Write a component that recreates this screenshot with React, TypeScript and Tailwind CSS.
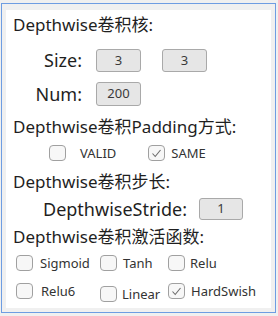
const font = "font-['Noto_Sans','Noto_Sans_CJK_SC',sans-serif]";

const Box = ({ value, w = 'w-[45px]', h = 'h-[23px]' }: { value: string; w?: string; h?: string }) => (
  <div
    className={`${w} ${h} flex items-center justify-center rounded-[3px] border border-[#a9a9a9] bg-[#e6e6e6] text-[13px] text-[#3a3a3a]`}
  >
    {value}
  </div>
);

const Check = ({ checked = false }: { checked?: boolean }) => (
  <div className="w-[17px] h-[16px] shrink-0 rounded-[4px] border border-[#a0a0a0] bg-[#f7f7f7] flex items-center justify-center">
    {checked ? (
      <svg width="13" height="13" viewBox="0 0 13 13" fill="none">
        <polyline points="2.5,6.5 5.2,9.5 10.5,3" stroke="#6b6b6b" strokeWidth="1.1" />
      </svg>
    ) : null}
  </div>
);

const Option = ({ label, checked, gap = 'gap-[6px]', className = '' }: OptionProps) => (
  <div className={`flex items-center h-[16px] ${gap} ${className}`}>
    <Check checked={checked} />
    <span className="text-[13px] leading-[16px] text-[#333]">{label}</span>
  </div>
);

type OptionProps = {
  label: string;
  checked?: boolean;
  gap?: string;
  className?: string;
};

const Heading = ({ children, className = '' }: { children: string; className?: string }) => (
  <div className={`h-[24px] leading-[24px] text-[17px] text-[#1f1f1f] pl-[7px] ${className}`}>{children}</div>
);

export default function App() {
  return (
    <div className={`w-[278px] h-[316px] bg-[#f0f0f0] pt-[3px] pl-[1px] ${font}`}>
      <div className="w-[275px] h-[310px] border border-[#6e9de2] pl-[4px] pt-[6px] pr-[3px] pb-[3px]">
        <div className="w-[265px] h-[298px] bg-white flex flex-col pt-[3px]">
          <Heading>Depthwise卷积核:</Heading>

          <div className="mt-[12px] flex items-center h-[23px]">
            <div className="w-[76px] text-right text-[18px] leading-[23px] text-[#1f1f1f]">Size:</div>
            <div className="ml-[14px] flex gap-[21px]">
              <Box value="3" />
              <Box value="3" />
            </div>
          </div>

          <div className="mt-[10px] flex items-center h-[24px]">
            <div className="w-[76px] text-right text-[18px] leading-[24px] text-[#1f1f1f]">Num:</div>
            <div className="ml-[14px]">
              <Box value="200" h="h-[24px]" />
            </div>
          </div>

          <Heading className="mt-[9px]">Depthwise卷积Padding方式:</Heading>

          <div className="mt-[6px] flex pl-[43px]">
            <Option label="VALID" gap="gap-[14px]" />
            <Option label="SAME" checked className="ml-[32px]" />
          </div>

          <Heading className="mt-[9px]">Depthwise卷积步长:</Heading>

          <div className="mt-[4px] flex items-center h-[22px] pl-[37px]">
            <div className="text-[18px] leading-[22px] text-[#1f1f1f]">DepthwiseStride:</div>
            <div className="ml-[12px]">
              <Box value="1" w="w-[44px]" h="h-[22px]" />
            </div>
          </div>

          <Heading className="mt-[5px] pl-[6px]">Depthwise卷积激活函数:</Heading>

          <div className="mt-[6px] pl-[10px] grid grid-cols-[84px_68px_1fr] gap-y-[12px] items-start">
            <Option label="Sigmoid" gap="gap-[7px]" />
            <Option label="Tanh" />
            <Option label="Relu" gap="gap-[5px]" />
            <Option label="Relu6" gap="gap-[8px]" />
            <Option label="Linear" gap="gap-[5px]" className="mt-[3px]" />
            <Option label="HardSwish" checked />
          </div>
        </div>
      </div>
    </div>
  );
}
